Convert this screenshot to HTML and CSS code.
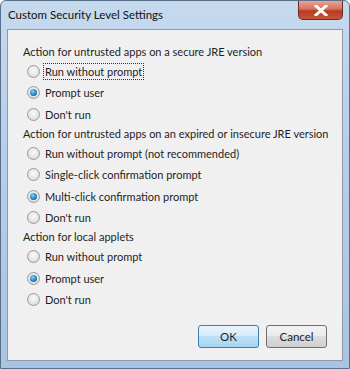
FILE: index.html
```html
<!DOCTYPE html>
<html>
<head>
<meta charset="utf-8">
<link rel="stylesheet" href="styles.css">
</head>
<body>
<div class="window">
  <div class="titlebar">
    <span class="title">Custom Security Level Settings</span>
    <div class="close">
      <svg width="14" height="11" viewBox="0 0 14 11"><path d="M2 1 L12 10 M12 1 L2 10" stroke="#fff" stroke-width="3" stroke-linecap="square"/></svg>
    </div>
  </div>
  <div class="client">
    <div class="heading">Action for untrusted apps on a secure JRE version</div>
    <div class="opt"><span class="radio"></span><span class="label focus">Run without prompt</span></div>
    <div class="opt"><span class="radio on"></span><span class="label">Prompt user</span></div>
    <div class="opt"><span class="radio"></span><span class="label">Don't run</span></div>
    <div class="heading">Action for untrusted apps on an expired or insecure JRE version</div>
    <div class="opt"><span class="radio"></span><span class="label">Run without prompt (not recommended)</span></div>
    <div class="opt"><span class="radio"></span><span class="label">Single-click confirmation prompt</span></div>
    <div class="opt"><span class="radio on"></span><span class="label">Multi-click confirmation prompt</span></div>
    <div class="opt"><span class="radio"></span><span class="label">Don't run</span></div>
    <div class="heading">Action for local applets</div>
    <div class="opt"><span class="radio"></span><span class="label">Run without prompt</span></div>
    <div class="opt"><span class="radio on"></span><span class="label">Prompt user</span></div>
    <div class="opt"><span class="radio"></span><span class="label">Don't run</span></div>
    <div class="buttons">
      <div class="btn default">OK</div>
      <div class="btn">Cancel</div>
    </div>
  </div>
</div>
</body>
</html>
```
FILE: styles.css
```css
html, body { margin: 0; padding: 0; }
body { width: 350px; height: 369px; overflow: hidden; font-family: Lato, "Noto Sans", sans-serif; font-size: 11px; color: #1e1e1e; }
.window {
  width: 350px; height: 369px; box-sizing: border-box;
  background: linear-gradient(180deg, #c6daee 0%, #b9d1ea 30%, #a9c4e2 100%);
  border: 1px solid #5a6f8a; border-radius: 6px 6px 0 0;
  padding: 0 6px 7px 6px;
  display: flex; flex-direction: column;
}
.titlebar { height: 28px; display: flex; align-items: flex-start; justify-content: space-between; flex: none; }
.title { margin-top: 7px; margin-left: 1px; font-size: 11.5px; color: #111; white-space: nowrap; }
.close {
  width: 43px; height: 18px;
  background: linear-gradient(180deg, #e8a597 0%, #d4715d 45%, #b83a22 55%, #c8533b 100%);
  border: 1px solid #6b2a1e; border-top: none; border-radius: 0 0 5px 5px;
  display: flex; align-items: center; justify-content: center;
}
.client {
  flex: 1; background: #f0f0f0; border: 1px solid #8d9aab;
  padding: 13px 0 0 15px; box-sizing: border-box;
  display: flex; flex-direction: column;
}
.heading { height: 18px; line-height: 18px; white-space: nowrap; }
.opt { height: 21.3px; display: flex; align-items: center; padding-left: 4px; white-space: nowrap; }
.radio {
  width: 11px; height: 11px; border-radius: 50%; border: 1px solid #9a9a9a;
  background: radial-gradient(circle at 50% 40%, #fafafa 0%, #e4e4e4 60%, #cfcfcf 100%);
  margin-right: 4px; flex: none; position: relative;
}
.radio.on::after {
  content: ""; position: absolute; left: 2px; top: 2px; width: 7px; height: 7px; border-radius: 50%;
  background: radial-gradient(circle at 40% 35%, #8fd2f2 0%, #2a8bc4 50%, #0c4f83 100%);
}
.label { padding: 0 1px; line-height: 15px; }
.label.focus { outline: 1px dotted #333; outline-offset: 0; }
.buttons { display: flex; justify-content: flex-end; gap: 7px; margin-top: auto; margin-bottom: 12px; padding-right: 15px; }
.btn {
  width: 59px; height: 21px; box-sizing: content-box; border: 1px solid #707070; border-radius: 3px;
  background: linear-gradient(180deg, #f2f2f2 0%, #ebebeb 45%, #dddddd 50%, #cfcfcf 100%);
  display: flex; align-items: center; justify-content: center; font-size: 11.5px;
}
.btn.default {
  border-color: #3c7fb1;
  background: linear-gradient(180deg, #e8f4fc 0%, #d7ecf9 45%, #bde0f6 50%, #a7d4f3 100%);
}
```
